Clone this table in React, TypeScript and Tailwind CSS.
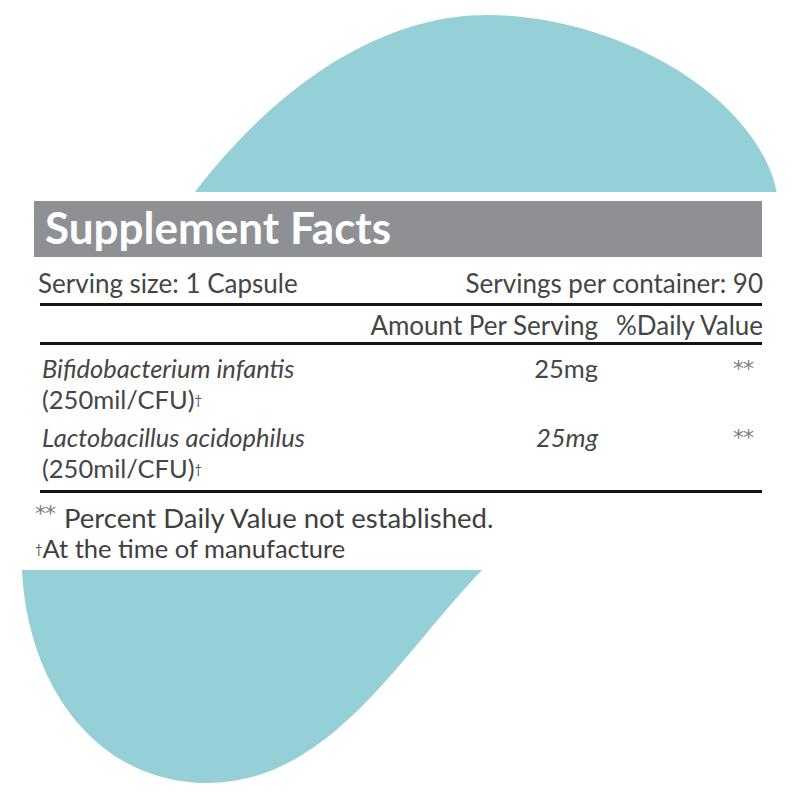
const font = { fontFamily: "Lato, 'Open Sans', sans-serif" };
const starFont = { fontFamily: "'DejaVu Sans', sans-serif" };

const Blob = () => (
  <svg
    className="absolute inset-0"
    width="800"
    height="800"
    viewBox="0 0 800 800"
  >
    <path
      d="M 207 783 C 100 783, 28 690, 22 570 L 22 420 C 60 330, 120 280, 195 192 C 265 100, 370 15, 487 15 C 620 15, 765 100, 778 200 L 778 300 L 482 570 C 400 655, 330 783, 207 783 Z"
      fill="#94d0d6"
    />
  </svg>
);

const Line = () => <div className="ml-[2px] mr-[1px] h-[3px] bg-[#151515]" />;

const Stars = ({ className }: { className?: string }) => (
  <span className={"text-[#7d7d7d] tracking-[-1px] " + (className ?? "")} style={starFont}>
    **
  </span>
);

const Ingredient = ({
  name,
  amount,
  italicAmount,
  className,
}: {
  name: string;
  amount: string;
  italicAmount?: boolean;
  className?: string;
}) => (
  <div className={"flex text-[25.5px] leading-[31px] text-[#464646] " + (className ?? "")}>
    <div className="flex-1 pl-[4px]">
      <div className="italic">{name}</div>
      <div>
        (250mil/CFU)<sup className="text-[13px] relative -top-[4px] text-[#555]">†</sup>
      </div>
    </div>
    <div className={"w-[228px] text-right " + (italicAmount ? "italic" : "")}>
      {amount}
    </div>
    <div className="w-[165px] text-right pr-[10px] leading-[26px]">
      <Stars className="text-[22px]" />
    </div>
  </div>
);

export default function App() {
  return (
    <div className="relative w-[800px] h-[800px] bg-white overflow-hidden" style={font}>
      <Blob />
      <div className="relative ml-[22px] mt-[192px] w-[758px] h-[378px] bg-white pt-[9px]">
        <div className="ml-[12px] mr-[18px] h-[56px] bg-[#8f9094] flex items-center pl-[11px] pb-[4px]">
          <h1 className="text-white font-bold text-[44px] leading-none">Supplement Facts</h1>
        </div>
        <div className="pl-[16px] pr-[17px]">
          <div className="h-[46px] flex items-center justify-between pt-[6px] text-[26px] text-[#454545]">
            <span>Serving size: 1 Capsule</span>
            <span>Servings per container: 90</span>
          </div>
          <Line />
          <div className="h-[36px] flex items-center justify-end pt-[2px] text-[26px] text-[#454545]">
            <span className="w-[228px] text-right whitespace-nowrap">Amount Per Serving</span>
            <span className="w-[165px] text-right">%Daily Value</span>
          </div>
          <Line />
          <Ingredient className="mt-[8px]" name="Bifidobacterium infantis" amount="25mg" />
          <Ingredient
            className="mt-[7px] mb-[6px]"
            name="Lactobacillus acidophilus"
            amount="25mg"
            italicAmount
          />
          <Line />
          <div className="mt-[9px] -ml-[3px] text-[#3f3f3f]">
            <div className="flex items-start text-[27.5px] leading-[31px]">
              <Stars className="text-[22px] leading-[24px] mr-[9px]" />
              <span>Percent Daily Value not established.</span>
            </div>
            <div className="text-[25.5px] leading-[31px]">
              <sup className="text-[13px] relative -top-[4px] text-[#555]">†</sup>At the time of manufacture
            </div>
          </div>
        </div>
      </div>
    </div>
  );
}
